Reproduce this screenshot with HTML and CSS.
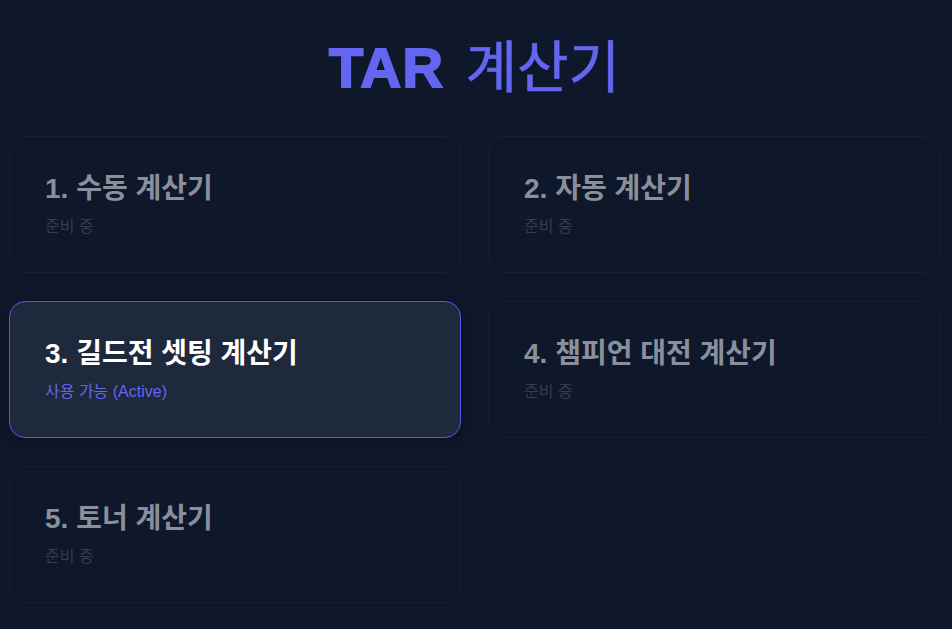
FILE: index.html
```html
<!DOCTYPE html>
<html lang="ko">
<head>
<meta charset="utf-8">
<title>TAR 계산기</title>
<link rel="stylesheet" href="styles.css">
</head>
<body>
<div class="app">
  <h1 class="title">TAR <span class="title-ko">계산기</span></h1>
  <div class="grid">
    <div class="card">
      <h2 class="card-title">1. 수동 계산기</h2>
      <p class="card-sub">준비 중</p>
    </div>
    <div class="card">
      <h2 class="card-title">2. 자동 계산기</h2>
      <p class="card-sub">준비 중</p>
    </div>
    <div class="card card-active">
      <h2 class="card-title">3. 길드전 셋팅 계산기</h2>
      <p class="card-sub">사용 가능 (Active)</p>
    </div>
    <div class="card">
      <h2 class="card-title">4. 챔피언 대전 계산기</h2>
      <p class="card-sub">준비 중</p>
    </div>
    <div class="card">
      <h2 class="card-title">5. 토너 계산기</h2>
      <p class="card-sub">준비 중</p>
    </div>
  </div>
</div>
</body>
</html>
```

FILE: styles.css
```css
html, body {
  margin: 0;
  padding: 0;
  background: #0f172a;
}
body {
  font-family: "Liberation Sans", Arial, "Noto Sans CJK KR", sans-serif;
  color: #e2e8f0;
}
.app {
  padding: 28px 12px 0 9px;
}
.title {
  margin: 0 0 33px;
  text-align: center;
  font-family: "Liberation Sans", Arial, "Noto Sans CJK KR", sans-serif;
  font-size: 56px;
  line-height: 70px;
  font-weight: 700;
  letter-spacing: 1.5px;
  color: #6366f1;
  -webkit-text-stroke: 2px #6366f1;
}
.title-ko {
  margin-left: 4px;
  letter-spacing: 0;
  font-family: "Noto Sans CJK KR", sans-serif;
  font-weight: 400;
  -webkit-text-stroke: 0.6px #6366f1;
}
.grid {
  display: grid;
  grid-template-columns: 1fr 1fr;
  gap: 28px 27px;
}
.card {
  box-sizing: border-box;
  height: 137px;
  padding: 35px 35px 0;
  border: 1px solid #172033;
  border-radius: 16px;
  background: #0f172a;
}
.card-title {
  margin: 0;
  font-size: 28px;
  line-height: 34px;
  font-weight: 700;
  color: #8a909b;
}
.card-sub {
  margin: 11px 0 0;
  font-size: 16px;
  line-height: 20px;
  color: #343c4d;
}
.card-active {
  background: #1e293b;
  border-color: #5558e6;
  box-shadow: 0 4px 14px rgba(0, 0, 0, 0.3);
}
.card-active .card-title {
  color: #ffffff;
}
.card-active .card-sub {
  color: #6366f1;
}
```
